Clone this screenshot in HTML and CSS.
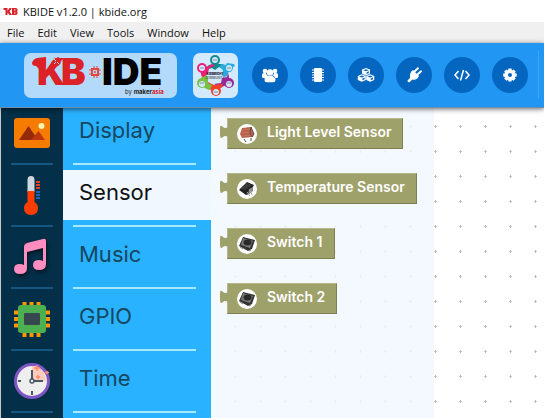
FILE: index.html
```html
<!DOCTYPE html>
<html lang="en">
<head>
<meta charset="utf-8">
<title>KBIDE v1.2.0 | kbide.org</title>
<link rel="stylesheet" href="styles.css">
</head>
<body>
<div class="titlebar">
  <svg class="app-icon" viewBox="0 0 14 9" aria-hidden="true"><path d="M0 1h4v3l2-3h2.400L6 4.400 8.500 8H6L4 5.500V8H2V3H0zM8.500 1h4l1.500 1v2l-.700.500.700.500v2L12.500 8h-4zm2 1.500v1h1.500v-1zm0 3v1h1.500v-1z" fill="#dc2127" fill-rule="evenodd"/></svg>
  <span>KBIDE v1.2.0 | kbide.org</span>
</div>
<nav class="menubar">
  <button>File</button><button>Edit</button><button>View</button><button>Tools</button><button>Window</button><button>Help</button>
</nav>
<header class="header">
  <a class="logo" href="#" aria-label="KB IDE by makerasia">
    <svg viewBox="0 0 153 45" width="153" height="45">
      <path d="M8 10q1-4 5-5l9-1v9h-6v4l-4-4q-4 0-4-3z" fill="#dc2127"/>
      <text x="13" y="32" class="logo-kb">K</text>
      <text x="37" y="32" class="logo-kb">B</text>
      <path d="M28 8l6-4 3 2-2 2 2 2-3 3-4 1-4-2z" fill="#dc2127"/>
      <path d="M30 6l2 2M33 9l2 2M30 11l2-2" stroke="#b3d9fb"/>
      <rect x="68" y="16" width="6" height="6" fill="none" stroke="#e4453f" stroke-width="2"/>
      <path d="M70 13v2M73 13v2M70 23v2M73 23v2M65 17h2M65 21h2M75 17h2M75 21h2" stroke="#e4453f"/>
      <circle cx="71" cy="19" r="1" fill="#e4453f"/>
      <text x="78" y="32" class="logo-ide">IDE</text>
      <text x="101" y="41" class="logo-by">by <tspan class="maker">maker</tspan><tspan class="asia">asia</tspan></text>
    </svg>
  </a>
  <a class="community" href="#" aria-label="Community">
    <svg viewBox="0 0 45 45" width="45" height="45">
      <g fill="#0f8b8d"><path d="M13 17q1-6 7-6h7q5 0 6 4l-7-1-4 3-3-2z"/><circle cx="22" cy="7" r="5"/></g>
      <g fill="#29abe2"><path d="M29 11q7 1 7 7l-2 5q-3 2-5-1l1-5-4-3z"/><path d="M34 10l7 1 1 2-2 1q0 6-6 5-4-4 0-9z"/></g>
      <g fill="#9b2895"><path d="M35 20q3 7-2 12l-6 3-6-4 7-1 1-5 5-1z"/><circle cx="36" cy="30" r="5"/></g>
      <g fill="#f0412a"><path d="M12 30q2-2 5 0l4 2 8-1q2 2-1 4l-6 3-7-2z"/><circle cx="23" cy="38" r="5"/></g>
      <g fill="#7ac143"><path d="M9 21q5 0 6 4v5l4 2-2 5q-8-1-9-9z"/><circle cx="9" cy="30" r="5"/></g>
      <g fill="#ed1e79"><path d="M8 18l7-5 5-2 2 2-6 2-1 6-5 3q-3-2-2-6z"/><circle cx="9" cy="15" r="5"/></g>
      <g fill="#d3e9fd"><circle cx="22" cy="7" r="3"/><circle cx="36" cy="15" r="3"/><circle cx="36" cy="31" r="3"/><circle cx="23" cy="39" r="3"/><circle cx="9" cy="31" r="3"/><circle cx="9" cy="15" r="3"/></g>
      <path d="M20 7h4M34 15h4M34 30h4M21 39h4M7 30h4M7 15h4" stroke="#7a8f9f"/>
      <text x="22" y="22" class="comm-name">KIDBRIGHT</text>
      <text x="22" y="26" class="comm-sub">COMMUNITY</text>
    </svg>
  </a>
  <div class="tools">
    <button aria-label="Community"><svg viewBox="0 0 18 16"><circle cx="4" cy="4" r="2.300"/><circle cx="14" cy="4" r="2.300"/><circle cx="9" cy="5.500" r="3.200"/><path d="M1 10V8q0-2 2-2h2q.500 2 1.500 3L4 11H2.500Q1 11 1 10zM17 10V8q0-2-2-2h-2q-.500 2-1.500 3l2.500 2h1.500Q17 11 17 10zM3.500 13q0-4 3-4.500 2.500 1.200 5 0 3 .500 3 4.500 0 2.300-2 2.300h-7q-2 0-2-2.300z"/></svg></button>
    <button aria-label="Board"><svg viewBox="0 0 18 16"><rect x="5" y="1" width="8" height="14" rx="1"/><path d="M3 3h12M3 5.500h12M3 8h12M3 10.500h12M3 13h12" stroke="#fff"/></svg></button>
    <button aria-label="Packages"><svg viewBox="0 0 18 16"><g id="cube"><path d="M9 1l4 1.600v4L9 8.500 5 6.600v-4z"/><path d="M6.300 3.200L9 4.300l2.700-1.100L9 2.200zM9.600 7l2.200-1V4.300l-2.200.900z" fill="#0566c0"/></g><use href="#cube" x="-4.200" y="6.300"/><use href="#cube" x="4.200" y="6.300"/></svg></button>
    <button aria-label="Connect"><svg viewBox="0 0 18 16"><path d="M8 3l6 6q-2 4.500-6.500 3.500L4 15.500 2.200 14l3-3.500Q4 6 8 3z"/><path d="M9.500 4.500L13 1.300M12.500 7.500L16 4.300" stroke="#fff" stroke-width="2" stroke-linecap="round"/></svg></button>
    <button aria-label="Source code"><svg viewBox="0 0 18 16"><path d="M5.500 4L2 8l3.500 4M12.500 4L16 8l-3.500 4M10.500 3l-3 10.500" fill="none" stroke="#fff" stroke-width="1.500"/></svg></button>
    <button aria-label="Settings"><svg viewBox="0 0 18 16"><path d="M7.500 1.500h3l.400 1.900 1.700-1 2.100 2.100-1 1.700 2 .400v2.800l-2 .500 1 1.700-2.100 2.100-1.700-1-.400 1.900h-3L7 12.700l-1.700 1-2.100-2.100 1-1.700-2-.500V6.600l2-.400-1-1.700 2.100-2.100 1.700 1z"/><circle cx="9" cy="8" r="2" fill="#0566c0"/></svg></button>
  </div>
  <div class="divider"></div>
</header>
<main class="editor">
  <aside class="rail" aria-hidden="true">
    <div class="icon-cell"><svg viewBox="0 0 36 36"><rect y="3" width="36" height="30" rx="3" fill="#f57c00"/><path d="M5 25l9.500-14L24 25z" fill="#942a09"/><path d="M17 25l7.500-9L31 25z" fill="#bf360c"/><circle cx="27.500" cy="11" r="3" fill="#fff3b0"/></svg></div>
    <div class="icon-cell"><svg viewBox="0 0 36 36"><path d="M13.500 15V3q0-4 3.500-4t3.500 4v12z" fill="#cfd8dc"/><path d="M13.500 14h7v11q3.500 2 3.500 6 0 7-7 7t-7-7q0-4 3.500-6z" fill="#ff3d00"/><path d="M22 5h4M22 8h4M22 11h4" stroke="#dd4624" stroke-width="2"/><path d="M22 15h4M22 18h4M22 21h4" stroke="#1269b8" stroke-width="2"/></svg></div>
    <div class="icon-cell"><svg class="shadowed" viewBox="0 0 36 36"><path d="M10 8q0-3 3-4l16-4q3-1 3 2v23q0 6-7 6-6 0-6-5t6-5q2 0 4 1V9L13 13v16q0 6-7 6-6 0-6-5t6-5q2 0 4 1z" fill="#ff8dc0"/></svg></div>
    <div class="icon-cell"><svg viewBox="0 0 36 36"><path d="M8.500 1h4v5h-4zM15.500 1h4v5h-4zM22.500 1h4v5h-4zM8.500 31h4v5h-4zM15.500 31h4v5h-4zM22.500 31h4v5h-4zM0 9.500h5v4H0zM0 16h5v4H0zM0 22.500h5v4H0zM31 9.500h5v4h-5zM31 16h5v4h-5zM31 22.500h5v4h-5z" fill="#ff9800"/><rect x="4" y="4" width="28" height="28" rx="3" fill="#4caf50"/><rect x="10" y="12" width="16" height="12" rx="1" fill="#37474f"/></svg></div>
    <div class="icon-cell"><svg viewBox="0 0 36 36"><circle cx="18" cy="18" r="16.500" fill="#eee" stroke="#7e57c2" stroke-width="3"/><path d="M18 18V3q12 0 14 15z" fill="#ffccbc"/><path d="M18 18V7M18 18h11M18 28v4M4 18h3" stroke="#455a64" stroke-width="2"/><circle cx="18" cy="18" r="2" fill="#eee" stroke="#455a64" stroke-width="1.500"/><path d="M23 2v6M20 5h6M24 12v4M22 14h4M33 8v3M31 9.500h4" stroke="#ff8a70" stroke-width="1.500"/></svg></div>
  </aside>
  <nav class="categories">
    <button>Display</button>
    <button class="selected" aria-current="true">Sensor</button>
    <button>Music</button>
    <button>GPIO</button>
    <button>Time</button>
  </nav>
  <section class="workspace" aria-label="Workspace">
    <svg class="dots" aria-hidden="true"><defs><pattern id="grid" x="23" y="17" width="25" height="25" patternUnits="userSpaceOnUse"><path d="M0 1h3v1H0z" fill="#ccc"/><path d="M1 0h1v3H1z" fill="#bbb"/></pattern></defs><rect width="100%" height="100%" fill="url(#grid)"/></svg>
    <div class="flyout">
      <div class="block">
        <svg class="tab" viewBox="0 0 9 16"><path d="M9 3Q6 5 4 3 1 0 1 4v6q0 6 3 3 2-2 5 0z"/></svg>
        <svg class="thumb" viewBox="0 0 20 20"><circle cx="10" cy="10" r="10" fill="#fff"/><path d="M5 4l9-1 3 7-2 3-10 1-2-4z" fill="#b9604b"/><path d="M5 6l10-1M4 9l12-1M5 12l11-1" stroke="#c67561"/><path d="M14 3l3 7-2 3-2-4zM7 15l2 3M14 14v3" stroke="#65483e" fill="none"/></svg>
        <span>Light Level Sensor</span>
      </div>
      <div class="block">
        <svg class="tab" viewBox="0 0 9 16"><path d="M9 3Q6 5 4 3 1 0 1 4v6q0 6 3 3 2-2 5 0z"/></svg>
        <svg class="thumb" viewBox="0 0 20 20"><circle cx="10" cy="10" r="10" fill="#fff"/><path d="M2 11l8-8 7 3-5 9-3 1z" fill="#222"/><path d="M3 10l7-6 5 2-7 5z" fill="#3a3a3a"/><path d="M12 10l4-2v4l-5 4z" fill="#888"/><path d="M10 13l3 4M13 11l2 5" stroke="#aaa"/></svg>
        <span>Temperature Sensor</span>
      </div>
      <div class="block">
        <svg class="tab" viewBox="0 0 9 16"><path d="M9 3Q6 5 4 3 1 0 1 4v6q0 6 3 3 2-2 5 0z"/></svg>
        <svg class="thumb" viewBox="0 0 20 20"><circle cx="10" cy="10" r="10" fill="#fff"/><path d="M6 3l12 3-3 9-4 2-9-5z" fill="#333"/><path d="M6 4l10 3-3 7-9-3z" fill="#777"/><ellipse cx="10.500" cy="8.500" rx="4" ry="3" fill="#292929"/><path d="M3 13l3 2M12 17l2-1" stroke="#888"/></svg>
        <span>Switch 1</span>
      </div>
      <div class="block">
        <svg class="tab" viewBox="0 0 9 16"><path d="M9 3Q6 5 4 3 1 0 1 4v6q0 6 3 3 2-2 5 0z"/></svg>
        <svg class="thumb" viewBox="0 0 20 20"><circle cx="10" cy="10" r="10" fill="#fff"/><path d="M6 3l12 3-3 9-4 2-9-5z" fill="#333"/><path d="M6 4l10 3-3 7-9-3z" fill="#777"/><ellipse cx="10.500" cy="8.500" rx="4" ry="3" fill="#292929"/><path d="M3 13l3 2M12 17l2-1" stroke="#888"/></svg>
        <span>Switch 2</span>
      </div>
    </div>
  </section>
</main>
</body>
</html>
```
FILE: styles.css
```css
* { box-sizing: border-box; }
body {
  margin: 0;
  height: 100vh;
  display: flex;
  flex-direction: column;
  overflow: hidden;
  font-family: "Open Sans", sans-serif;
  font-size: 11px;
  color: #111;
  background: #fff;
}
button {
  border: 0;
  padding: 0;
  background: none;
  font: inherit;
  color: inherit;
}
svg { display: block; flex: none; overflow: visible; }

.titlebar {
  display: flex;
  flex: none;
  align-items: center;
  gap: 5px;
  height: 22px;
  padding-left: 3px;
}
.app-icon { width: 15px; height: 9px; }
.menubar {
  display: flex;
  flex: none;
  align-items: center;
  gap: 13px;
  height: 21px;
  padding-left: 7px;
  background: #f0f0f0;
}

.header {
  position: relative;
  z-index: 2;
  display: flex;
  align-items: center;
  flex: none;
  height: 65px;
  padding: 0 5px 0 24px;
  background: #2196f3;
  border-bottom: 1px solid #6c8fae;
  box-shadow: 0 1px 5px rgba(0, 0, 0, 0.6);
}
.logo, .community { border-radius: 7px; }
.logo { background: #b3dafb; }
.community { margin-left: 16px; background: #d3e9fd; }
.logo-kb, .logo-ide { font: 900 37px Inter, sans-serif; }
.logo-kb { fill: #dc2127; }
.logo-by { font: 6px Inter, sans-serif; fill: #222; }
.maker { font-weight: 700; }
.asia { font-weight: 700; fill: #dc2127; }
.comm-name, .comm-sub { font: 900 3px Inter, sans-serif; text-anchor: middle; fill: #222; }
.comm-sub { font-weight: 400; }
.tools { display: flex; gap: 12px; margin-left: 14px; }
.tools button {
  display: grid;
  place-items: center;
  width: 36px;
  height: 36px;
  border-radius: 50%;
  background: #0566c0;
}
.tools svg { width: 18px; height: 16px; fill: #fff; }
.divider { width: 1px; height: 48px; margin-left: auto; background: #45a5f3; }

.editor {
  display: flex;
  flex: 1;
  min-height: 0;
  border-left: 1px solid #c8c8c8;
}
.rail, .categories { display: flex; flex-direction: column; overflow: hidden; }
.rail { width: 62px; flex: none; background: #032f48; }
.icon-cell {
  display: grid;
  flex: none;
  place-items: center;
  height: 50px;
  margin-bottom: 12px;
  position: relative;
}
.icon-cell svg { width: 36px; height: 36px; }
.shadowed { filter: drop-shadow(1px 2px 2px rgba(0, 0, 0, 0.6)); }
.icon-cell::after, .categories button::after {
  content: "";
  position: absolute;
  left: 10px;
  right: 10px;
  top: 55px;
  height: 2px;
  background: #17567f;
}
.categories { width: 148px; flex: none; background: #29b2ff; }
.categories button {
  position: relative;
  flex: none;
  height: 50px;
  margin-bottom: 12px;
  padding: 0 16px 6px;
  text-align: left;
  font: 22px Inter, sans-serif;
  color: #16475f;
}
.categories button::after { right: 15px; background: #a6e8ff; }
.categories .selected { background: #f0f7ff; color: #111; }

.workspace { position: relative; flex: 1; min-width: 0; overflow: hidden; }
.dots { position: absolute; inset: 0; width: 100%; height: 100%; }
.flyout {
  position: relative;
  display: flex;
  flex-direction: column;
  align-items: flex-start;
  gap: 24px;
  width: 67%;
  height: 100%;
  padding: 10px 0 0 16px;
  background: rgba(242, 247, 255, 0.85);
}
.block {
  position: relative;
  display: flex;
  align-items: center;
  gap: 10px;
  height: 31px;
  padding: 0 11px 0 9px;
  border: 1px solid #b6b88b;
  border-right-color: #7d7f50;
  border-bottom-color: #7d7f50;
  background: #9fa16b;
  font: 600 14px Inter, sans-serif;
  color: #fff;
  white-space: nowrap;
}
.block span { padding-bottom: 5px; }
.thumb { width: 20px; height: 20px; }
.tab {
  position: absolute;
  left: -9px;
  top: 5px;
  width: 9px;
  height: 16px;
  fill: #9fa16b;
}
```
